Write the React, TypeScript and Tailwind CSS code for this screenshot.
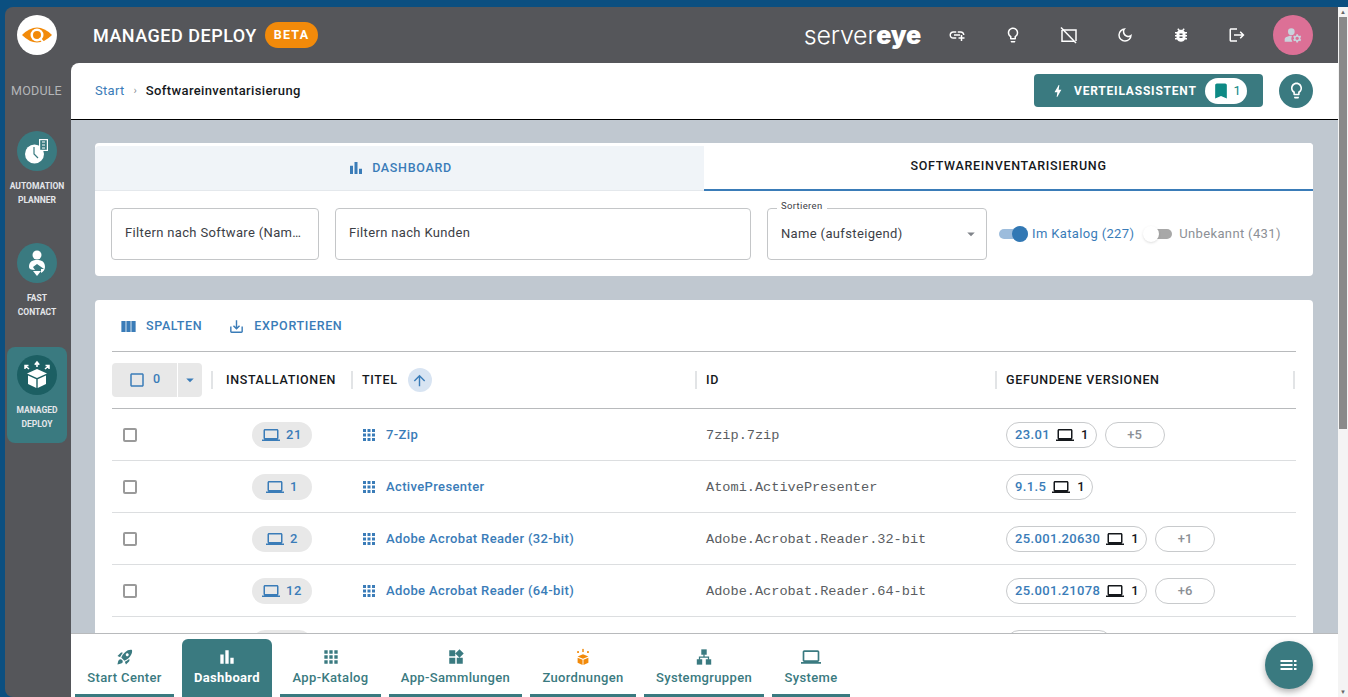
import React from "react";
import {
  MdAddLink,
  MdApps,
  MdArrowDropDown,
  MdArrowUpward,
  MdBarChart,
  MdBolt,
  MdBookmark,
  MdBugReport,
  MdCheckBoxOutlineBlank,
  MdLaptop,
  MdLogout,
  MdManageAccounts,
  MdOutlineDarkMode,
  MdOutlineLightbulb,
  MdRocketLaunch,
  MdSaveAlt,
  MdViewColumn,
  MdWidgets,
} from "react-icons/md";

const font = { fontFamily: "Roboto, sans-serif" };

const rows = [
  { count: 21, title: "7-Zip", id: "7zip.7zip", version: "23.01", more: "+5" },
  { count: 1, title: "ActivePresenter", id: "Atomi.ActivePresenter", version: "9.1.5", more: "" },
  { count: 2, title: "Adobe Acrobat Reader (32-bit)", id: "Adobe.Acrobat.Reader.32-bit", version: "25.001.20630", more: "+1" },
  { count: 12, title: "Adobe Acrobat Reader (64-bit)", id: "Adobe.Acrobat.Reader.64-bit", version: "25.001.21078", more: "+6" },
];

const EyeLogo = () => (
  <svg viewBox="0 0 32 32" className="w-[32px] h-[32px]">
    <path d="M1 16 Q16 1 31 16 Q16 31 1 16 Z" fill="#f28a0a" />
    <circle cx="16" cy="16" r="6.5" fill="#fff" />
    <circle cx="16" cy="16" r="4" fill="#f28a0a" />
    <path d="M18.5 19 L23 24" stroke="#fff" strokeWidth="2" />
  </svg>
);

const PlannerIcon = () => (
  <svg viewBox="0 0 40 40" className="w-[40px] h-[40px]">
    <circle cx="17.5" cy="23" r="9.5" fill="#fff" />
    <path d="M17 16 L17 23 L21 27" stroke="#3a7a80" strokeWidth="1.2" fill="none" />
    <rect x="22" y="8" width="9" height="12" fill="#fff" />
    <rect x="23.2" y="9.2" width="6.6" height="9.6" fill="#3a7a80" />
    <path d="M25 11 h3 M25 14 h3 M25 17 h3" stroke="#fff" strokeWidth="1.2" />
  </svg>
);

const ContactIcon = () => (
  <svg viewBox="0 0 40 40" className="w-[40px] h-[40px]">
    <circle cx="20" cy="12" r="4.5" fill="#fff" />
    <path d="M12 24 C12 18 16 17 20 17 C24 17 28 18 28 24 C28 27 26 29 24 30 L24 26 L27 26 L20 21 L16 24 L18 27 C14 27 12 26 12 24 Z" fill="#fff" />
    <path d="M16 28 h8 l-4 5 z" fill="#fff" />
  </svg>
);

const DeployIcon = () => (
  <svg viewBox="0 0 40 40" className="w-[40px] h-[40px]">
    <path d="M20 14 L30 18.5 L20 23 L10 18.5 Z" fill="#fff" />
    <path d="M11 20.5 L19.3 24.2 V33 L11 29 Z" fill="#fff" />
    <path d="M29 20.5 L20.7 24.2 V33 L29 29 Z" fill="#fff" />
    <path d="M20 12 V8 M17.8 9.8 L20 7 L22.2 9.8" stroke="#fff" strokeWidth="1.6" fill="none" />
    <path d="M12 14 L8.5 11 M8 14 V10.5 H11.5" stroke="#fff" strokeWidth="1.5" fill="none" />
    <path d="M28 14 L31.5 11 M32 14 V10.5 H28.5" stroke="#fff" strokeWidth="1.5" fill="none" />
  </svg>
);

const ScreenOff = () => (
  <svg viewBox="0 0 18 18" className="w-[18px] h-[18px]" fill="none" stroke="#fff" strokeWidth="1.5">
    <path d="M2 4 H16 V15 M14 15.2 H2 V4" />
    <path d="M1 1.5 L16 17" />
  </svg>
);

const FabIcon = () => (
  <svg viewBox="0 0 20 20" className="w-[20px] h-[20px]" fill="#fff">
    <rect x="1.5" y="5" width="12" height="2" />
    <rect x="1.5" y="9" width="12" height="2" />
    <rect x="1.5" y="13" width="12" height="2" />
    <rect x="15" y="5" width="2.5" height="2" />
    <rect x="15" y="9" width="2.5" height="2" />
    <rect x="15" y="13" width="2.5" height="2" />
  </svg>
);

const SitemapIcon = () => (
  <svg viewBox="0 0 20 20" className="w-[18px] h-[18px]" fill="#3a7a80">
    <rect x="7" y="1.5" width="6" height="6" />
    <rect x="2" y="12.5" width="6" height="6" />
    <rect x="12" y="12.5" width="6" height="6" />
    <path d="M9.3 7 h1.4 v2.5 h5 v3.5 h-1.4 v-2.1 h-8.6 v2.1 h-1.4 v-3.5 h5 z" />
  </svg>
);

const CubeOrangeIcon = () => (
  <svg viewBox="0 0 20 20" className="w-[18px] h-[18px]" fill="#f28a0a">
    <path d="M10 7 L16 9.5 L10 12 L4 9.5 Z" />
    <path d="M4 10.8 L9.5 13 V19 L4 16.5 Z" />
    <path d="M16 10.8 L10.5 13 V19 L16 16.5 Z" />
    <rect x="9.2" y="1" width="1.6" height="3.5" />
    <rect x="3.5" y="3.5" width="2" height="2" />
    <rect x="14.5" y="3.5" width="2" height="2" />
  </svg>
);

const SideItem = ({ icon, lines, active }: { icon: React.ReactNode; lines: string[]; active?: boolean }) => (
  <div className={`w-[60px] ml-[2px] flex flex-col items-center rounded-lg ${active ? "bg-[#3a7a80] h-[96px] pt-[8px]" : ""}`}>
    <div className={`w-[40px] h-[40px] rounded-full flex items-center justify-center ${active ? "bg-[#1c5f63]" : "bg-[#3a7a80]"}`}>
      {icon}
    </div>
    <div className="mt-[8px] text-[8.5px] font-bold text-[#e4e6ea] leading-[14px] text-center">
      {lines.map((l) => (
        <div key={l}>{l}</div>
      ))}
    </div>
  </div>
);

const NavItem = ({ icon, label, w, active }: { icon: React.ReactNode; label: string; w: string; active?: boolean }) => (
  <div
    className={`${w} h-[58px] rounded-t-md flex flex-col items-center border-b-[3px] border-[#3a7a80] pt-[8px] ${
      active ? "bg-[#3a7a80] text-white font-bold" : "text-[#3a7a80] font-medium"
    }`}
  >
    <div className="h-[20px] flex items-center justify-center">{icon}</div>
    <div className="text-[13px] leading-[16px] mt-[3px] tracking-[0.35px] whitespace-nowrap">{label}</div>
  </div>
);

const Sep = () => <div className="w-[2px] h-[18px] -ml-px mr-px bg-[#e2e4e6]" />;

export default function App() {
  return (
    <div style={font} className="w-[1348px] h-[697px] overflow-hidden bg-[#0b4f80] pt-[7px] flex">
      <div className="flex-1 min-w-0 flex ml-[5px] bg-[#55565a] rounded-tl-lg rounded-bl-lg overflow-hidden">
        {/* sidebar */}
        <div className="w-[66px] shrink-0 flex flex-col">
          <div className="h-[56px] flex items-start pl-[12px] pt-[8px]">
            <div className="w-[40px] h-[40px] rounded-full bg-white flex items-center justify-center">
              <EyeLogo />
            </div>
          </div>
          <div className="h-[56px] flex items-center justify-center pr-[3px] text-[12.5px] text-[#b3b5b8] tracking-[0.2px]">
            MODULE
          </div>
          <div className="mt-[12px] flex flex-col">
            <SideItem icon={<PlannerIcon />} lines={["AUTOMATION", "PLANNER"]} />
            <div className="h-[36px]" />
            <SideItem icon={<ContactIcon />} lines={["FAST", "CONTACT"]} />
            <div className="h-[28px]" />
            <SideItem icon={<DeployIcon />} lines={["MANAGED", "DEPLOY"]} active />
          </div>
        </div>

        {/* main */}
        <div className="flex-1 min-w-0 flex flex-col">
          <div className="h-[56px] shrink-0 flex items-center pl-[22px] pr-[25px] text-white">
            <div className="text-[18px] font-medium tracking-[0.5px]">MANAGED DEPLOY</div>
            <div className="ml-[8px] h-[26px] px-[9px] rounded-full bg-[#f28a0a] text-[12.5px] font-bold tracking-[1.2px] flex items-center">
              BETA
            </div>
            <div className="ml-auto text-[25px] leading-none tracking-[-0.2px] flex" style={{ fontFamily: "Inter, sans-serif" }}>
              <span className="font-light">server</span>
              <span className="font-black">eye</span>
            </div>
            <div className="ml-[26px] w-[20px] flex justify-center"><MdAddLink size={18} /></div>
            <div className="ml-[36px] w-[20px] flex justify-center"><MdOutlineLightbulb size={18} /></div>
            <div className="ml-[36px] w-[20px] flex justify-center"><ScreenOff /></div>
            <div className="ml-[36px] w-[20px] flex justify-center"><MdOutlineDarkMode size={18} /></div>
            <div className="ml-[36px] w-[20px] flex justify-center"><MdBugReport size={18} /></div>
            <div className="ml-[36px] w-[20px] flex justify-center"><MdLogout size={18} /></div>
            <div className="ml-[26px] w-[40px] h-[40px] rounded-full bg-[#dc7096] flex items-center justify-center text-[#c9d3dc]">
              <MdManageAccounts size={20} />
            </div>
          </div>

          <div className="flex-1 min-h-0 flex flex-col bg-white rounded-tl-lg overflow-hidden">
            {/* breadcrumb */}
            <div className="h-[57px] shrink-0 border-b border-black flex items-center pl-[24px] pr-[25px]">
              <span className="text-[13px] text-[#3a7cb8] tracking-[0.3px]">Start</span>
              <span className="text-[11px] text-[#8a8f96] mx-[9px]">›</span>
              <span className="text-[13px] font-medium text-[#15181c] tracking-[0.37px]">Softwareinventarisierung</span>
              <button className="ml-auto -mt-[1px] h-[33px] w-[229px] rounded bg-[#3a7a80] text-white flex items-center pl-[16px]">
                <MdBolt size={16} />
                <span className="ml-[8px] text-[12px] font-bold tracking-[0.8px]">VERTEILASSISTENT</span>
                <span className="ml-[8px] w-[42px] h-[26px] rounded-full bg-white flex items-center justify-center text-[#0e8a85]">
                  <MdBookmark size={20} />
                  <span className="ml-[3px] text-[13px]">1</span>
                </span>
              </button>
              <div className="ml-[16px] -mt-[1px] w-[34px] h-[34px] rounded-full bg-[#3a7a80] text-white flex items-center justify-center">
                <MdOutlineLightbulb size={19} />
              </div>
            </div>

            {/* content */}
            <div className="flex-1 min-h-0 overflow-hidden bg-[#c0c8d0] pl-[24px] pr-[25px] pt-[23px]">
              <div className="bg-white rounded">
                <div className="flex h-[48px] items-end">
                  <div className="w-[609px] h-[45px] bg-[#f0f4f8] rounded-tl flex items-center justify-center text-[#3a7cb8] text-[12.5px] font-medium tracking-[0.7px] border-b border-[#e4e8ec]">
                    <MdBarChart size={18} className="mr-[7px]" />
                    DASHBOARD
                  </div>
                  <div className="flex-1 h-[48px] bg-white rounded-t flex items-center justify-center text-[#15181c] text-[12.5px] font-medium tracking-[0.7px] border-b-2 border-[#3a7cb8]">
                    SOFTWAREINVENTARISIERUNG
                  </div>
                </div>
                <div className="h-[85px] px-[16px] flex items-center text-[13px] text-[#3c4046] tracking-[0.35px]">
                  <div className="w-[208px] h-[52px] border border-[#c4c6c8] rounded flex items-center pl-[13px] pb-[1px]">
                    Filtern nach Software (Nam…
                  </div>
                  <div className="ml-[16px] w-[416px] h-[52px] border border-[#c4c6c8] rounded flex items-center pl-[13px] pb-[1px]">
                    Filtern nach Kunden
                  </div>
                  <div className="relative ml-[16px] w-[220px] h-[52px] border border-[#c4c6c8] rounded flex items-center pl-[13px]">
                    <span className="absolute -top-[10px] left-[9px] bg-white px-[4px] text-[9.5px] leading-[13px]">Sortieren</span>
                    Name (aufsteigend)
                    <MdArrowDropDown size={18} className="ml-auto mr-[6px] text-[#80848a]" />
                  </div>
                  <div className="ml-[12px] relative w-[29px] h-[10px] rounded-full bg-[#9cbcdc]">
                    <div className="absolute right-0 -top-[3px] w-[16px] h-[16px] rounded-full bg-[#3278b4]" />
                  </div>
                  <span className="ml-[4px] text-[#3a7cb8]">Im Katalog (227)</span>
                  <div className="ml-[11px] relative w-[27px] h-[10px] rounded-full bg-[#a8a8a8]">
                    <div className="absolute -left-[2px] -top-[3px] w-[16px] h-[16px] rounded-full bg-white shadow" />
                  </div>
                  <span className="ml-[7px] text-[#8c9096]">Unbekannt (431)</span>
                </div>
              </div>

              <div className="mt-[24px] bg-white rounded px-[17px]">
                <div className="h-[52px] flex items-center pl-[7px] pt-[1px] text-[#3a7cb8] text-[12.5px] font-medium tracking-[0.65px] border-b border-[#b8babc]">
                  <MdViewColumn size={19} />
                  <span className="ml-[8px]">SPALTEN</span>
                  <MdSaveAlt size={17} className="ml-[26px]" />
                  <span className="ml-[9px]">EXPORTIEREN</span>
                </div>
                <div className="grid grid-cols-[100px_140px_344px_300px_300px] h-[57px] items-center border-b border-[#b8babc] text-[12.5px] font-medium text-[#15181c] tracking-[0.65px]">
                  <div className="flex items-center h-[34px]">
                    <div className="w-[65px] h-full rounded-l bg-[#e8e8e8] flex items-center justify-center text-[#3a7cb8]">
                      <MdCheckBoxOutlineBlank size={18} />
                      <span className="ml-[7px] mb-[2px]">0</span>
                    </div>
                    <div className="ml-px w-[24px] h-full rounded-r bg-[#e8e8e8] flex items-center justify-center text-[#3a7cb8]">
                      <MdArrowDropDown size={18} />
                    </div>
                  </div>
                  <div className="flex items-center">
                    <Sep />
                    <span className="ml-[12px]">INSTALLATIONEN</span>
                  </div>
                  <div className="flex items-center">
                    <Sep />
                    <span className="ml-[8px]">TITEL</span>
                    <span className="ml-[10px] w-[24px] h-[24px] rounded-full bg-[#d8e4f2] text-[#3a7cb8] flex items-center justify-center">
                      <MdArrowUpward size={17} />
                    </span>
                  </div>
                  <div className="flex items-center">
                    <Sep />
                    <span className="ml-[8px]">ID</span>
                  </div>
                  <div className="flex items-center">
                    <Sep />
                    <span className="ml-[8px]">GEFUNDENE VERSIONEN</span>
                    <div className="ml-auto"><Sep /></div>
                  </div>
                </div>
                {rows.map((r) => (
                  <div
                    key={r.id}
                    className="grid grid-cols-[100px_140px_344px_300px_300px] h-[52px] items-center border-b border-[#dcdee0] text-[13px]"
                  >
                    <div className="pl-[11px] flex items-center">
                      <div className="w-[14px] h-[14px] border-2 border-[#9a9a9a] rounded-[2px]" />
                    </div>
                    <div className="flex justify-center">
                      <div className="w-[60px] h-[26px] rounded-full bg-[#e8e8e8] flex items-center justify-center text-[#3a7cb8] font-medium tracking-[0.5px]">
                        <MdLaptop size={18} />
                        <span className="ml-[6px]">{r.count}</span>
                      </div>
                    </div>
                    <div className="pl-[8px] flex items-center text-[#3a7cb8] font-medium tracking-[0.37px]">
                      <MdApps size={18} />
                      <span className="ml-[8px]">{r.title}</span>
                    </div>
                    <div className="pl-[10px] pt-[3px] text-[#5a5d62] text-[13.6px]" style={{ fontFamily: "'Liberation Mono', monospace" }}>
                      {r.id}
                    </div>
                    <div className="pl-[10px] flex items-center gap-[8px]">
                      <div className="h-[26px] rounded-full border border-[#c8cacc] flex items-center pl-[8px] pr-[7px] font-medium tracking-[0.35px]">
                        <span className="text-[#3a7cb8]">{r.version}</span>
                        <MdLaptop size={18} className="ml-[6px] text-[#15181c]" />
                        <span className="ml-[7px] text-[#15181c]">1</span>
                      </div>
                      {r.more && (
                        <div className="w-[60px] h-[26px] rounded-full border border-[#c8cacc] flex items-center justify-center text-[#8c9096] font-medium">
                          {r.more}
                        </div>
                      )}
                    </div>
                  </div>
                ))}
                <div className="grid grid-cols-[100px_140px_344px_300px_300px] h-[52px] pt-[13px]">
                  <div />
                  <div className="flex justify-center">
                    <div className="w-[60px] h-[26px] rounded-full bg-[#e8e8e8]" />
                  </div>
                  <div />
                  <div />
                  <div className="pl-[10px]">
                    <div className="w-[106px] h-[26px] rounded-full border border-[#c8cacc]" />
                  </div>
                </div>
              </div>
            </div>

            {/* bottom nav */}
            <div className="relative h-[64px] shrink-0 bg-white border-t border-[#b8babc] flex items-end gap-[8px] pl-[4px]">
              <NavItem w="w-[99px]" label="Start Center" icon={<MdRocketLaunch size={18} />} />
              <NavItem w="w-[90px]" label="Dashboard" icon={<MdBarChart size={20} />} active />
              <NavItem w="w-[101px]" label="App-Katalog" icon={<MdApps size={20} />} />
              <NavItem w="w-[133px]" label="App-Sammlungen" icon={<MdWidgets size={18} />} />
              <NavItem w="w-[106px]" label="Zuordnungen" icon={<CubeOrangeIcon />} />
              <NavItem w="w-[120px]" label="Systemgruppen" icon={<SitemapIcon />} />
              <NavItem w="w-[78px]" label="Systeme" icon={<MdLaptop size={20} />} />
              <div className="absolute right-[25px] top-[7px] w-[48px] h-[48px] rounded-full bg-[#3a7a80] shadow-[0_3px_6px_rgba(0,0,0,0.3)] flex items-center justify-center">
                <FabIcon />
              </div>
            </div>
          </div>
        </div>
      </div>

      {/* scrollbar */}
      <div className="w-[10px] shrink-0 bg-[#f4f4f4] flex flex-col items-center">
        <div className="text-[6px] leading-[10px] text-[#666]">▲</div>
        <div className="w-[8px] h-[412px] bg-[#8a8a8a]" />
        <div className="flex-1" />
        <div className="text-[6px] leading-[10px] text-[#666]">▼</div>
      </div>
    </div>
  );
}
